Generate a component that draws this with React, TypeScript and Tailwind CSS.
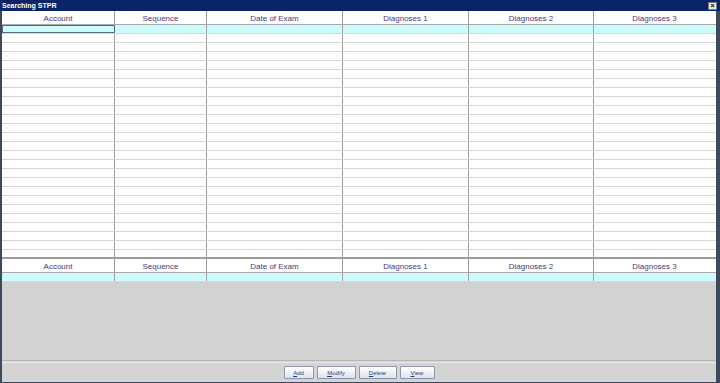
import React from 'react';

const cols = ['Account', 'Sequence', 'Date of Exam', 'Diagnoses 1', 'Diagnoses 2', 'Diagnoses 3'];
const gridCols = 'grid grid-cols-[113px_92px_136px_126px_125px_121px]';

function HeaderRow() {
  return (
    <div className={`${gridCols} h-[14px] bg-white border-b border-[#a8a8a8]`}>
      {cols.map((c, i) => (
        <div
          key={c}
          className={`flex items-center justify-center pt-[2px] text-[8px] leading-none text-[#4a3678] ${i < cols.length - 1 ? 'border-r border-[#9a9a9a]' : ''}`}
        >
          {c}
        </div>
      ))}
    </div>
  );
}

function DataRow({ selected, focus }: { selected?: boolean; focus?: boolean }) {
  return (
    <div className={`${gridCols} h-[9px] border-b border-[#d6d6d6] ${selected ? 'bg-[#ccfcfc]' : 'bg-white'}`}>
      {cols.map((c, i) => (
        <div
          key={c}
          className={`${i < cols.length - 1 ? 'border-r border-[#a0a0a0]' : ''} ${focus && i === 0 ? 'outline outline-1 -outline-offset-1 outline-[#5a6a80]' : ''}`}
        />
      ))}
    </div>
  );
}

function Btn({ label, w }: { label: string; w: string }) {
  return (
    <button className={`${w} h-[13px] text-[6px] leading-none text-[#283c78] bg-gradient-to-b from-white to-[#dde3ee] border border-[#8d97a8] rounded-[1px]`}>
      <span className="underline">{label[0]}</span>
      {label.slice(1)}
    </button>
  );
}

export default function App() {
  const rows = Array.from({ length: 26 }, (_, i) => i);
  return (
    <div className="w-[720px] h-[383px] flex flex-col bg-[#3e4a5a] overflow-hidden" style={{ fontFamily: '"Liberation Sans", Arial, sans-serif' }}>
      {/* title bar */}
      <div className="h-[11px] bg-[#0b2468] flex items-center justify-between pl-[2px] pr-[3px]">
        <span className="text-[7px] font-bold text-white leading-none">Searching STPR</span>
        <span className="w-[9px] h-[8px] bg-[#e8e8e8] border border-[#7a7a7a] flex items-center justify-center text-[7px] font-bold leading-none text-black">×</span>
      </div>

      <div className="flex-1 flex flex-col ml-[2px] mr-[4px] mb-[1px] bg-[#d4d4d4]">
        {/* top table */}
        <div>
          <HeaderRow />
          <div className="h-[234px] overflow-hidden bg-white border-b-2 border-[#9c9c9c]">
            {rows.map((r) => (
              <DataRow key={r} selected={r === 0} focus={r === 0} />
            ))}
          </div>
        </div>

        {/* bottom table */}
        <div className="flex-1 flex flex-col border-b border-[#b8b8b8] mb-[1px]">
          <HeaderRow />
          <DataRow selected />
          <div className="flex-1 bg-[#d2d2d2]" />
        </div>

        {/* button bar */}
        <div className="h-[20px] flex items-center justify-center gap-[3px] bg-[#d4d4d4] border-t border-[#e8e8e8]">
          <Btn label="Add" w="w-[30px]" />
          <Btn label="Modify" w="w-[39px]" />
          <Btn label="Delete" w="w-[38px]" />
          <Btn label="View" w="w-[35px]" />
        </div>
      </div>
    </div>
  );
}
